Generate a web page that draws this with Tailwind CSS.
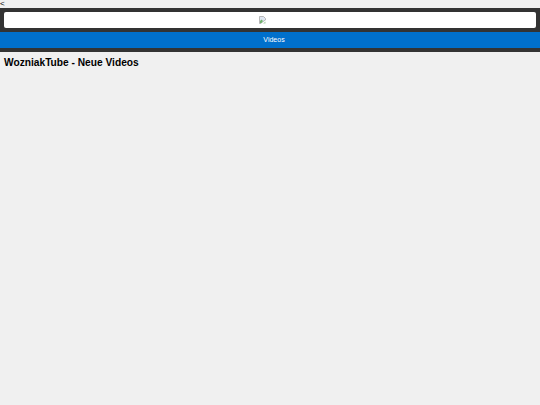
<!DOCTYPE html>
<html lang="de">
<head>
    <meta charset="UTF-8">
    <meta name="viewport" content="width=device-width, initial-scale=1.0">
    <title>WozniakTube - Neue Videos</title>
    <script src="https://cdn.jsdelivr.net/npm/@tailwindcss/browser@4"></script>
</head>
<body class="bg-[#f0f0f0] text-black min-h-screen font-['Liberation_Sans',Arial,sans-serif]">
    <div class="h-2 text-[8px] leading-[8px]">&lt;</div>

    <!-- Header -->
    <header class="bg-[#333333] py-1">
        <div class="mx-1 h-4 bg-white rounded-[2px] flex items-center justify-center">
            <!-- broken image icon -->
            <svg width="7" height="8" viewBox="0 0 7 8" class="mr-[15px]">
                <path d="M0.5 0.5 H4.5 L6.5 2.5 V4 L4 5.5 L2 7.5 H0.5 Z" fill="#dfe6f2" stroke="#a8a8a8" stroke-width="0.8"/>
                <path d="M1 7 L1 5 L2.5 3.5 L4 5 L2.5 7 Z" fill="#6fb26a"/>
                <path d="M4 7.5 L6.5 5.5 V7.5 Z" fill="#a9cfa6"/>
            </svg>
        </div>
        <nav class="mt-1 h-4 bg-[#0070cc] flex items-center justify-center pl-2">
            <a class="text-white text-[7px] leading-4">Videos</a>
        </nav>
    </header>

    <!-- Main Content -->
    <main class="px-1 pt-[4px]">
        <h1 class="text-[10.2px] leading-[14px] font-bold">WozniakTube - Neue Videos</h1>
    </main>
</body>
</html>
